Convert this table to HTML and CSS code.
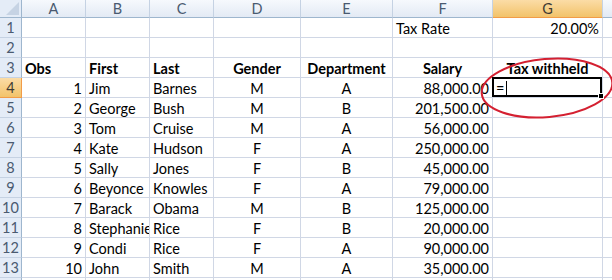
FILE: index.html
```html
<!DOCTYPE html>
<html>
<head>
<meta charset="utf-8">
<link rel="stylesheet" href="styles.css">
</head>
<body>
<div class="sheet">
  <div class="grid">
    <div class="corner"><span class="tri"></span></div>
    <div class="ch">A</div><div class="ch">B</div><div class="ch">C</div><div class="ch">D</div><div class="ch">E</div><div class="ch">F</div><div class="ch sel">G</div><div class="ch"></div>

    <div class="rh">1</div><div class="c"></div><div class="c"></div><div class="c"></div><div class="c"></div><div class="c"></div><div class="c">Tax Rate</div><div class="c r">20.00%</div><div class="c"></div>
    <div class="rh">2</div><div class="c"></div><div class="c"></div><div class="c"></div><div class="c"></div><div class="c"></div><div class="c"></div><div class="c"></div><div class="c"></div>
    <div class="rh">3</div><div class="c b">Obs</div><div class="c b">First</div><div class="c b">Last</div><div class="c b m">Gender</div><div class="c b m">Department</div><div class="c b m">Salary</div><div class="c b m">Tax withheld</div><div class="c"></div>
    <div class="rh sel">4</div><div class="c r">1</div><div class="c">Jim</div><div class="c">Barnes</div><div class="c m">M</div><div class="c m">A</div><div class="c r">88,000.00</div><div class="c active">=<span class="caret"></span></div><div class="c"></div>
    <div class="rh">5</div><div class="c r">2</div><div class="c">George</div><div class="c">Bush</div><div class="c m">M</div><div class="c m">B</div><div class="c r">201,500.00</div><div class="c"></div><div class="c"></div>
    <div class="rh">6</div><div class="c r">3</div><div class="c">Tom</div><div class="c">Cruise</div><div class="c m">M</div><div class="c m">A</div><div class="c r">56,000.00</div><div class="c"></div><div class="c"></div>
    <div class="rh">7</div><div class="c r">4</div><div class="c">Kate</div><div class="c">Hudson</div><div class="c m">F</div><div class="c m">A</div><div class="c r">250,000.00</div><div class="c"></div><div class="c"></div>
    <div class="rh">8</div><div class="c r">5</div><div class="c">Sally</div><div class="c">Jones</div><div class="c m">F</div><div class="c m">B</div><div class="c r">45,000.00</div><div class="c"></div><div class="c"></div>
    <div class="rh">9</div><div class="c r">6</div><div class="c">Beyonce</div><div class="c">Knowles</div><div class="c m">F</div><div class="c m">A</div><div class="c r">79,000.00</div><div class="c"></div><div class="c"></div>
    <div class="rh">10</div><div class="c r">7</div><div class="c">Barack</div><div class="c">Obama</div><div class="c m">M</div><div class="c m">B</div><div class="c r">125,000.00</div><div class="c"></div><div class="c"></div>
    <div class="rh">11</div><div class="c r">8</div><div class="c">Stephanie</div><div class="c">Rice</div><div class="c m">F</div><div class="c m">B</div><div class="c r">20,000.00</div><div class="c"></div><div class="c"></div>
    <div class="rh">12</div><div class="c r">9</div><div class="c">Condi</div><div class="c">Rice</div><div class="c m">F</div><div class="c m">A</div><div class="c r">90,000.00</div><div class="c"></div><div class="c"></div>
    <div class="rh">13</div><div class="c r">10</div><div class="c">John</div><div class="c">Smith</div><div class="c m">M</div><div class="c m">A</div><div class="c r">35,000.00</div><div class="c"></div><div class="c"></div>
    <div class="rh"></div><div class="c"></div><div class="c"></div><div class="c"></div><div class="c"></div><div class="c"></div><div class="c"></div><div class="c"></div><div class="c"></div>
  </div>
  <svg class="mark" width="612" height="280" viewBox="0 0 612 280">
    <ellipse cx="547" cy="88" rx="65.5" ry="29" transform="rotate(-5 547 88)" fill="none" stroke="#d42031" stroke-width="2"/>
  </svg>
</div>
</body>
</html>
```
FILE: styles.css
```css
html, body {
  margin: 0;
  padding: 0;
  background: #ffffff;
  overflow: hidden;
}

.sheet {
  position: relative;
  width: 612px;
  height: 280px;
  overflow: hidden;
}

.grid {
  display: grid;
  grid-template-columns: 22px 64px 64px 64px 87px 92px 100px 110px 40px;
  grid-template-rows: 18px repeat(14, 20px);
  font-family: Lato, "Liberation Sans", sans-serif;
  font-size: 14.5px;
  color: #000;
}

.grid > div {
  box-sizing: border-box;
  border-right: 1px solid #d0d7e5;
  border-bottom: 1px solid #d0d7e5;
  white-space: nowrap;
  overflow: hidden;
  display: flex;
  align-items: center;
}

.corner {
  position: relative;
  background: #e4ecf7;
  border-color: #9eb6ce !important;
}

.tri {
  position: absolute;
  right: 2px;
  bottom: 2px;
  width: 0;
  height: 0;
  border-left: 13px solid transparent;
  border-bottom: 13px solid #c6d3e4;
}

.ch {
  justify-content: center;
  background: linear-gradient(#f6f9fd, #e3eaf4);
  border-right-color: #c5d2e3 !important;
  border-bottom-color: #9eb6ce !important;
  color: #4a5a70;
  font-size: 14.5px;
}

.rh {
  justify-content: center;
  background: #e4ecf7;
  border-right-color: #9eb6ce !important;
  border-bottom-color: #c5d2e3 !important;
  color: #4a5a70;
}

.ch.sel, .rh.sel {
  background: linear-gradient(#fbdca6, #f2c36a);
  color: #3e3a33;
  border-bottom-color: #f29c48 !important;
}

.rh.sel {
  border-right-color: #f29c48 !important;
}

.c {
  padding: 0 3px;
  padding-top: 1px;
}

.r { justify-content: flex-end; }
.m { justify-content: center; }
.b { font-weight: bold; }

.active {
  position: relative;
  overflow: visible !important;
  padding-left: 3px;
}

.active::after {
  content: "";
  position: absolute;
  left: -1px;
  top: -1px;
  right: 0;
  bottom: 0;
  border: 2px solid #000;
}

.active::before {
  content: "";
  position: absolute;
  right: -2px;
  bottom: -2px;
  width: 4px;
  height: 4px;
  background: #000;
  border: 1px solid #fff;
  z-index: 2;
}

.caret {
  display: inline-block;
  width: 1px;
  height: 15px;
  background: #000;
  margin-left: 2px;
}

.mark {
  position: absolute;
  left: 0;
  top: 0;
  pointer-events: none;
}
```
